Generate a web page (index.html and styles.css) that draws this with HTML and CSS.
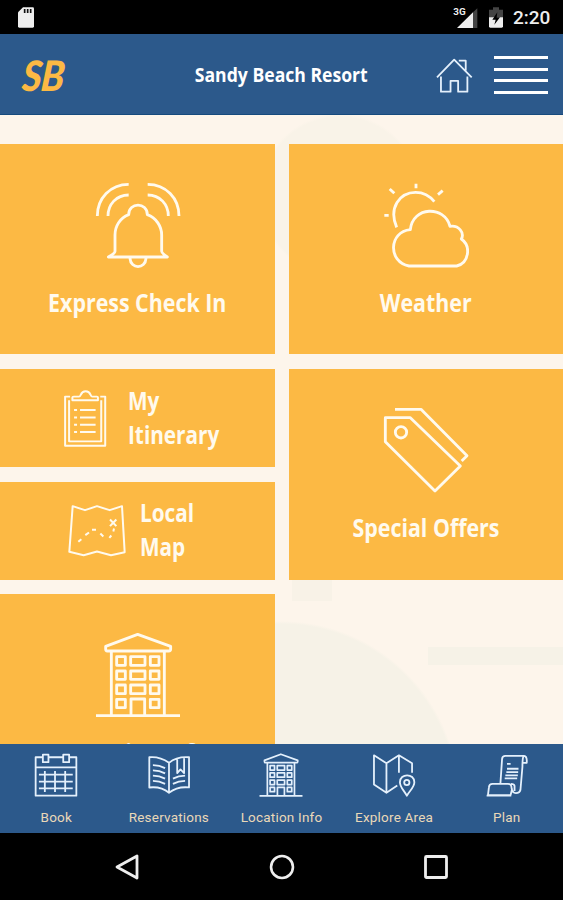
FILE: index.html
```html
<!DOCTYPE html>
<html lang="en">
<head>
<meta charset="utf-8">
<title>Sandy Beach Resort</title>
<link rel="stylesheet" href="styles.css">
</head>

<body>
<div class="status">
  <svg class="sd" viewBox="0 0 48 63"><path fill="#eee" d="M15 1H44Q48 1 48 5V58Q48 62 44 62H4Q0 62 0 58V16Z"/><path stroke="#111" stroke-width="5" d="M20 6V18M29 6V18M38 6V18"/></svg>
  <svg class="signal" viewBox="0 0 75 66"><text x="1" y="24" textLength="37" lengthAdjust="spacingAndGlyphs">3G</text><path fill="#444" d="M60 16L73 4V63H60Z"/><path fill="#eee" d="M12 63L60 16V63Z"/></svg>
  <svg class="battery" viewBox="0 0 42 63"><path fill="#444" d="M0 8H12V1H30V8H42V32H0Z"/><path fill="#eee" d="M0 31H42V58Q42 62 38 62H4Q0 62 0 58Z"/><path fill="#000" d="M25 16L10 38H20L16 53L33 31H23Z"/></svg>
  <span class="time">2:20</span>
</div>

<header class="header">
  <span class="logo">SB</span>
  <h1 class="title"><span>Sandy Beach Resort</span></h1>
  <svg class="home" viewBox="464 170 112 110"><path d="M467 231L519 177L572 231M533 180H554V210M479 228V274H508V241H531V274H559V228"/></svg>
  <div class="menu"><i></i><i></i><i></i><i></i></div>
</header>

<main class="content">
  <div class="tiles">
    <a class="tile">
      <svg viewBox="284 127 258 258"><path d="M385 134C330 134 291 176 291 229M385 166C348 166 323 194 323 229M442 134C497 134 536 176 536 229M442 166C479 166 504 194 504 229M385 225C385 187 441 187 441 225C468 235 484 260 484 286V335Q484 341 501 352H324Q344 341 344 335V286C344 260 359 235 385 225ZM389 356C391 389 435 389 437 356"/></svg>
      <span class="label">Express Check In</span>
    </a>
    <a class="tile">
      <svg viewBox="306 127 258 258"><path d="M347 263C322 205 356 158 404 158Q438 158 460 186M405 132V146M326 148L340 161M485 153L471 165M310 227H323M388 270C395 199 491 197 507 260C534 256 551 280 541 298C571 319 564 370 527 379H384C320 367 323 276 388 270Z"/></svg>
      <span class="label">Weather</span>
    </a>
    <a class="tile small">
      <svg class="clip" viewBox="190 86 132 178"><path d="M211 109H196V257H317V109H302M208 120V244H305V120M218 120V112Q218 109 222 109H238C245 109 241 93 258 93S271 109 278 109H292Q295 109 295 112V120Z"/><path d="M223 149H232M241 149H288M223 172H232M241 172H288M223 194H232M241 194H288M223 216H232M241 216H288"/></svg>
      <span class="label">My<br>Itinerary</span>
    </a>
    <a class="tile tall">
      <svg viewBox="306 142 258 258"><path d="M313 174H388L538 319L462 394L313 246ZM342 149H420L558 288L542 304"/><circle cx="360" cy="218" r="17"/></svg>
      <span class="label">Special Offers</span>
    </a>
    <a class="tile small local">
      <svg class="map" viewBox="205 431 174 158"><path d="M219 437L256 449L292 437L330 449L367 437L375 575L334 584L292 573L252 584L209 574ZM331 477L350 497M350 477L331 497"/><path d="M236 544L245 536M257 524L268 516M277 508L289 508M302 519L311 528M329 532L335 525M341 513L343 504"/></svg>
      <span class="label">Local<br>Map</span>
    </a>
    <a class="tile last">
      <svg viewBox="284 142 258 258"><path d="M412 149L316 185V194Q316 199 321 199H505Q511 199 511 194V185ZM333 200V392M492 200V392M287 393H539M392 392V343H433V392"/><path d="M349 216H375V242H349ZM391 216H434V242H391ZM450 216H476V242H450ZM349 259H375V284H349ZM391 259H434V284H391ZM450 259H476V284H450ZM349 301H375V327H349ZM391 301H434V327H391ZM450 301H476V327H450ZM349 344H375V369H349ZM450 344H476V369H450Z"/></svg>
      <span class="label">Location Info</span>
    </a>
  </div>
</main>

<nav class="tabs">
  <a class="tab">
    <svg viewBox="105 38 132 134"><path d="M131 51H109V168H233V51H212M149 51H192M109 82H233M119 104H222M119 125H222M119 146H222M137 93V157M168 93V157M199 93V157M131 43H148V66H131ZM193 43H211V66H193Z"/></svg>
    <span>Book</span>
  </a>
  <a class="tab">
    <svg viewBox="440 38 132 134"><path d="M506 68Q478 48 446 51V143Q482 139 506 159Q532 139 567 143V51Q530 48 506 68V156M457 75Q477 75 494 84M457 91Q477 91 494 100M457 107Q477 107 494 116M457 123Q477 123 494 132M518 116Q535 107 555 107M518 132Q535 123 555 123M531 55V99L541 88L552 99V52"/></svg>
    <span>Reservations</span>
  </a>
  <a class="tab">
    <svg viewBox="284 142 258 258"><path class="bold" d="M412 149L316 185V194Q316 199 321 199H505Q511 199 511 194V185ZM333 200V392M492 200V392M287 393H539M392 392V343H433V392M349 216H375V242H349ZM391 216H434V242H391ZM450 216H476V242H450ZM349 259H375V284H349ZM391 259H434V284H391ZM450 259H476V284H450ZM349 301H375V327H349ZM391 301H434V327H391ZM450 301H476V327H450ZM349 344H375V369H349ZM450 344H476V369H450Z"/></svg>
    <span>Location Info</span>
  </a>
  <a class="tab">
    <svg viewBox="274 38 132 134"><path d="M350 137L317 159L279 134V45L317 69L355 45L395 69V98M317 69V159M355 45V98M379 168C370 151 358 142 358 127C358 99 402 99 402 127C402 142 389 151 379 168Z"/><circle cx="379" cy="128" r="8"/></svg>
    <span>Explore Area</span>
  </a>
  <a class="tab">
    <svg viewBox="613 38 132 134"><path d="M659 130L664 56Q665 47 674 47H731Q741 48 739 68H728M729 48Q726 54 726 80L720 150Q718 160 706 160Q695 160 693 145Q693 132 682 132H635Q625 132 624 142L621 166H690L694 150M617 168H692M702 154V138Q701 132 691 132"/><path d="M679 71H690M679 86H714M677 96H713M674 106H712M672 115H710"/></svg>
    <span>Plan</span>
  </a>
</nav>

<div class="navbar">
  <svg viewBox="0 0 26 28"><path d="M23 3V25L3 14Z"/></svg>
  <svg viewBox="0 0 28 28"><circle cx="14" cy="14" r="11.8"/></svg>
  <svg viewBox="0 0 26 28"><rect x="2.5" y="3.5" width="21" height="21" rx="1"/></svg>
</div>
</body>
</html>
```

FILE: styles.css
```css
* {
  box-sizing: border-box;
}
body {
  margin: 0;
  width: 563px;
  height: 900px;
  overflow: hidden;
  display: flex;
  flex-direction: column;
  font-family: "Open Sans", sans-serif;
  background: #000;
}
svg {
  display: block;
  flex: none;
  fill: none;
  stroke-linejoin: round;
}
.status {
  height: 34px;
  display: flex;
  align-items: center;
  padding: 1px 12px 0 18px;
  color: #eee;
}
.sd {
  width: 16px;
  height: 21px;
  margin-right: auto;
}
.signal {
  width: 25px;
  height: 22px;
  margin-right: 11px;
  overflow: visible;
}
.signal text {
  font: bold 29px Roboto, sans-serif;
  fill: #eee;
}
.battery {
  width: 14px;
  height: 21px;
  margin-right: 10px;
}
.time {
  font: 500 19px/34px Roboto, sans-serif;
  width: 38px;
}
.header {
  height: 81px;
  background: #2c598b;
  border-bottom: 1px solid #164a7d;
  display: flex;
  align-items: center;
  padding: 2px 15px 0 21px;
}
.logo {
  width: 110px;
  padding-left: 2px;
  font: italic 900 42px/78px Lato, sans-serif;
  color: #fcb944;
  transform: scaleX(.9) skewX(-6deg);
  transform-origin: left;
  letter-spacing: -1px;
}
.title {
  margin: 0;
  width: 301px;
  text-align: center;
  font-size: 20px;
  line-height: 78px;
  font-weight: 700;
  color: #fff;
  white-space: nowrap;
}
.title span {
  display: inline-block;
  transform: scaleX(.88);
}
.home {
  width: 37px;
  height: 37px;
  margin-left: 4px;
  stroke: #e4f0fc;
  stroke-width: 5.5;
}
.menu {
  width: 54px;
  margin-left: auto;
  display: grid;
  gap: 8.4px;
}
.menu i {
  height: 3px;
  background: #fff;
}
.content {
  height: 629px;
  overflow: hidden;
  padding-top: 29px;
  background:
    radial-gradient(circle at 281px 684px, #f6f2e7 175px, transparent 178px),
    linear-gradient(#f6f2e7, #f6f2e7) 428px 532px / 135px 18px no-repeat,
    linear-gradient(#f8f2e7, #f8f2e7) 292px 460px / 40px 26px no-repeat,
    radial-gradient(circle at 340px 80px, #f9f3e8 78px, transparent 81px),
    #fdf5eb;
}
.tiles {
  display: grid;
  grid-template-columns: 275px 274px;
  grid-template-rows: 210px 98px 98px 210px;
  gap: 15px 14px;
}
.tile {
  background: #fcb944;
  display: flex;
  flex-direction: column;
  align-items: center;
  padding-top: 38px;
  color: #fffaee;
}
.tile svg {
  width: 86px;
  height: 86px;
  stroke: #fffaee;
  stroke-width: 8.5;
}
.label {
  font-size: 25px;
  line-height: 34px;
  font-weight: 700;
  white-space: nowrap;
  margin-top: 17px;
  transform: scaleX(.855);
}
.tall {
  grid-row: span 2;
}
.last {
  margin-top: -1px;
}
.last .label {
  margin-top: 17px;
}
.tile.small {
  flex-direction: row;
  align-items: flex-start;
  padding: 14px 0 0 63px;
}
.small .label {
  margin: 0 0 0 21px;
  transform: scaleX(.83);
  transform-origin: left;
}
.tile .clip {
  width: 44px;
  height: 59px;
  margin-top: 6px;
  stroke-width: 6;
}
.tile.local {
  padding-top: 13px;
  padding-left: 68px;
}
.tile .map {
  width: 58px;
  height: 53px;
  margin-top: 9px;
  stroke-width: 6;
}
.local .label {
  margin-left: 14px;
}
.tabs {
  height: 89px;
  background: #2c598b;
  display: grid;
  grid-template-columns: repeat(5, 1fr);
}
.tab {
  display: flex;
  flex-direction: column;
  align-items: center;
  padding-top: 9px;
  font: 13.5px/20px Roboto, sans-serif;
  letter-spacing: .2px;
  color: #ead8b8;
  white-space: nowrap;
}
.tab svg {
  width: 44px;
  height: 44px;
  margin-bottom: 10px;
  stroke: #e4f0fc;
  stroke-width: 5.5;
}
.tab .bold {
  stroke-width: 10;
}
.navbar {
  height: 67px;
  display: flex;
  justify-content: space-between;
  align-items: center;
  padding: 0 114px;
}
.navbar svg {
  width: 26px;
  height: 28px;
  stroke: #eee;
  stroke-width: 2.8;
}
```
